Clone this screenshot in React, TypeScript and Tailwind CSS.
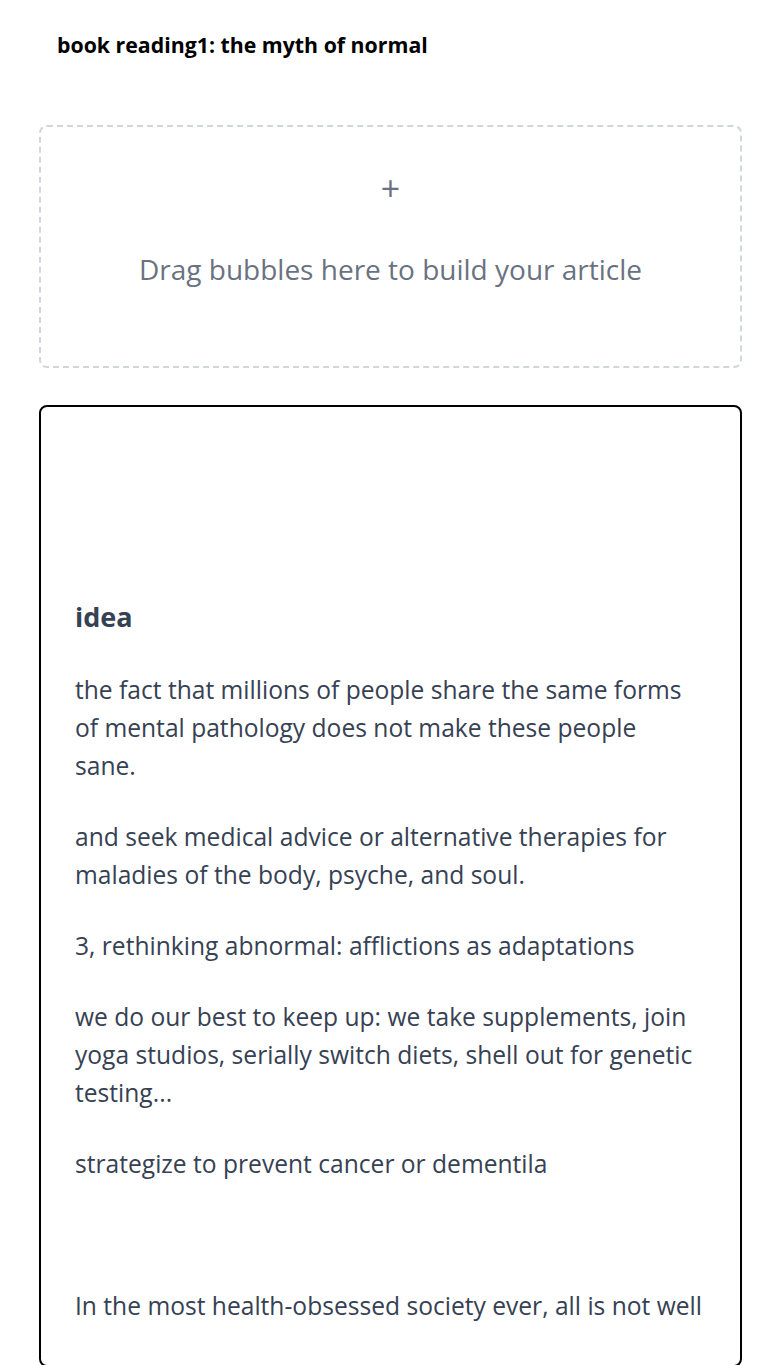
const paragraphs = [
  "the fact that millions of people share the same forms of mental pathology does not make these people sane.",
  "and seek medical advice or alternative therapies for maladies of the body, psyche, and soul.",
  "3, rethinking abnormal: afflictions as adaptations",
  "we do our best to keep up: we take supplements, join yoga studios, serially switch diets, shell out for genetic testing...",
  "strategize to prevent cancer or dementila",
  "",
  "In the most health-obsessed society ever, all is not well",
];

export default function App() {
  return (
    <div className="min-h-screen bg-white px-[39px] font-['Open_Sans',sans-serif]">
      <h1 className="pl-[18px] pt-[31px] text-[21.3px] font-bold leading-[28px] text-black">
        book reading1: the myth of normal
      </h1>

      <div className="mt-[66px] flex h-[243px] flex-col items-center rounded-lg border-2 border-dashed border-gray-300">
        <span className="mt-[44px] text-[34px] leading-none text-gray-500">+</span>
        <p className="mt-[43px] text-[28px] text-gray-500">Drag bubbles here to build your article</p>
      </div>

      <div className="mt-[37px] rounded-lg border-2 border-black pl-[34px] pr-[40px] pt-[190px] pb-10">
        <h2 className="text-[27px] font-bold leading-[40px] text-gray-700">idea</h2>
        <div className="mt-[34px] flex flex-col gap-[33px]">
          {paragraphs.map((text, i) => (
            <p
              key={i}
              className={
                i === paragraphs.length - 1
                  ? "min-h-[38px] whitespace-nowrap text-[24.6px] leading-[38px] text-gray-700"
                  : "min-h-[38px] text-[24.6px] leading-[38px] text-gray-700"
              }
            >
              {text}
            </p>
          ))}
        </div>
      </div>
    </div>
  );
}
